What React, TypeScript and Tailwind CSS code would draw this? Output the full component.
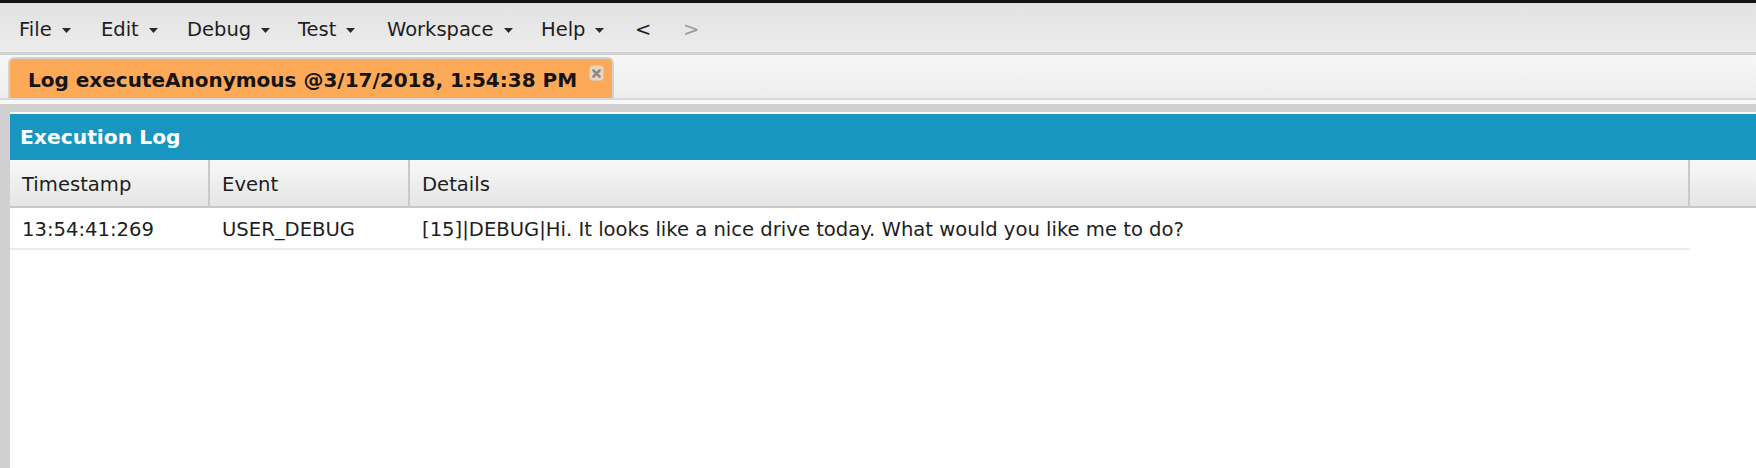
import React from "react";

const Caret = () => (
  <svg width="9" height="5" viewBox="0 0 9 5" className="ml-[10px] mt-[1px] shrink-0">
    <path d="M0 0H9L4.5 5Z" fill="#2a2a2a" />
  </svg>
);

const menus: { label: string; cls: string }[] = [
  { label: "File", cls: "w-[82px]" },
  { label: "Edit", cls: "w-[86px]" },
  { label: "Debug", cls: "w-[111px]" },
  { label: "Test", cls: "w-[89px]" },
  { label: "Workspace", cls: "w-[154px]" },
  { label: "Help", cls: "w-[94px]" },
];

export default function App() {
  return (
    <div className="w-full h-[468px] overflow-hidden flex flex-col font-['DejaVu_Sans',Verdana,sans-serif] text-[#1e1e1e]">
      {/* top dark line */}
      <div className="h-[3px] bg-[#141414] shrink-0" />
      {/* menu bar */}
      <div className="h-[49px] shrink-0 flex items-center pl-[19px] pt-[4px] bg-gradient-to-b from-[#e2e2e2] to-[#ececec] text-[19.5px]">
        {menus.map((m) => (
          <div key={m.label} className={`flex items-center ${m.cls}`}>
            <span>{m.label}</span>
            <Caret />
          </div>
        ))}
        <div className="w-[48px]">&lt;</div>
        <div className="text-[#9a9a9a]">&gt;</div>
      </div>
      <div className="h-[3px] bg-[#d2d2d2] shrink-0" />
      {/* tab bar */}
      <div className="h-[43px] shrink-0 flex items-end pl-[8px] bg-gradient-to-b from-[#f7f7f7] to-[#ededed]">
        <div className="h-[41px] flex border-2 border-b-0 border-[#d2d2d2] rounded-t-[6px] bg-[#fcaa58] pl-[18px] pr-[8px]">
          <div className="self-center font-bold text-[20px] text-[#141414] leading-none pt-[3px]">
            Log executeAnonymous @3/17/2018, 1:54:38 PM
          </div>
          <div className="ml-[12px] mt-[6px] w-[15px] h-[16px] rounded-[4px] bg-[#e9d6bd] border border-[#d9c6ae] flex items-center justify-center">
            <svg width="9" height="9" viewBox="0 0 9 9">
              <path d="M1.5 1.5L7.5 7.5M7.5 1.5L1.5 7.5" stroke="#8a8a8a" strokeWidth="2.6" strokeLinecap="round" />
            </svg>
          </div>
        </div>
      </div>
      <div className="h-[2px] bg-[#d8d8d8] shrink-0" />
      <div className="h-[4px] bg-[#f8f8f8] shrink-0" />
      {/* content area */}
      <div className="flex-1 bg-[#d0d0d0] pl-[10px] pt-[8px] flex flex-col min-h-0">
        <div className="flex-1 bg-white border-t-2 border-white flex flex-col">
          <div className="h-[46px] shrink-0 bg-[#1896c1] flex items-center pl-[10px] pt-[1px] text-white font-bold text-[20.3px]">
            Execution Log
          </div>
          {/* header row */}
          <div className="h-[48px] shrink-0 flex border-b-2 border-[#c9c9c9] bg-gradient-to-b from-[#f8f8f8] to-[#e5e5e7] text-[19.6px]">
            <div className="w-[200px] border-r-2 border-[#c9c9c9] flex items-center pl-[12px] pt-[3px]">Timestamp</div>
            <div className="w-[200px] border-r-2 border-[#c9c9c9] flex items-center pl-[12px] pt-[3px]">Event</div>
            <div className="w-[1280px] border-r-2 border-[#c9c9c9] flex items-center pl-[12px] pt-[3px]">Details</div>
            <div className="flex-1" />
          </div>
          {/* data row */}
          <div className="w-[1680px] h-[42px] shrink-0 flex border-b-2 border-[#ebebeb] text-[19.6px]">
            <div className="w-[200px] flex items-center pl-[12px] pt-[3px]">13:54:41:269</div>
            <div className="w-[200px] flex items-center pl-[12px] pt-[3px]">USER_DEBUG</div>
            <div className="w-[1280px] flex items-center pl-[12px] pt-[3px] whitespace-nowrap">
              [15]|DEBUG|Hi. It looks like a nice drive today. What would you like me to do?
            </div>
          </div>
        </div>
      </div>
    </div>
  );
}
